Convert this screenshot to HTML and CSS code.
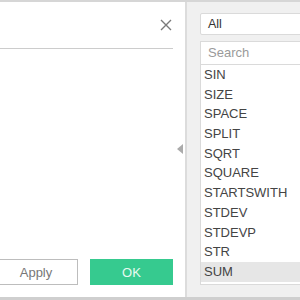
FILE: index.html
```html
<!DOCTYPE html>
<html>
<head lang="en">
    <meta charset="UTF-8">
    <title>calc-editor</title>
    <link rel="stylesheet" href="styles.css">
</head>
<body>
<div class="frame">
    <section class="dialog">
        <div class="dialog-head">
            <svg class="close" width="12" height="12" viewBox="0 0 12 12">
                <path d="M1 1 L11 11 M11 1 L1 11" stroke="#7a7a7a" stroke-width="1.4" fill="none"/>
            </svg>
        </div>
        <div class="dialog-body"></div>
        <div class="dialog-foot">
            <button class="btn btn-apply">Apply</button>
            <button class="btn btn-ok">OK</button>
        </div>
        <span class="collapse"></span>
    </section>
    <section class="side">
        <div class="select">All</div>
        <div class="search">Search</div>
        <ul class="func-list">
            <li>SIN</li>
            <li>SIZE</li>
            <li>SPACE</li>
            <li>SPLIT</li>
            <li>SQRT</li>
            <li>SQUARE</li>
            <li>STARTSWITH</li>
            <li>STDEV</li>
            <li>STDEVP</li>
            <li>STR</li>
            <li class="active">SUM</li>
        </ul>
    </section>
</div>
</body>
</html>
```

FILE: styles.css
```css
body {
    margin: 0;
    font-family: "Liberation Sans", Arial, sans-serif;
    font-size: 13px;
    color: #444;
}
.frame {
    display: flex;
    width: 300px;
    height: 300px;
    box-sizing: border-box;
    border-top: 2px solid #d6d6d6;
    border-bottom: 3px solid #cfcfcf;
    overflow: hidden;
}
.dialog {
    position: relative;
    width: 187px;
    flex-shrink: 0;
    box-sizing: border-box;
    background: #fff;
    border-right: 2px solid #dcdcdc;
    display: flex;
    flex-direction: column;
}
.dialog-head {
    height: 46px;
    margin-right: 12px;
    border-bottom: 1px solid #cccccc;
    display: flex;
    justify-content: flex-end;
    align-items: flex-start;
}
.close {
    margin-top: 17px;
    margin-right: 1px;
}
.dialog-body {
    flex: 1;
}
.dialog-foot {
    display: flex;
    justify-content: flex-end;
    gap: 12px;
    padding: 0 12px 12px 0;
}
.btn {
    flex-shrink: 0;
    height: 26px;
    font-family: inherit;
    font-size: 13px;
    box-sizing: border-box;
}
.btn-apply {
    width: 84px;
    background: #fff;
    border: 1px solid #bdbdbd;
    color: #777;
}
.btn-ok {
    width: 83px;
    background: #36ca8f;
    border: none;
    color: #e8faf1;
}
.collapse {
    position: absolute;
    right: 2px;
    top: 142px;
    width: 0;
    height: 0;
    border-top: 5px solid transparent;
    border-bottom: 5px solid transparent;
    border-right: 6px solid #ababab;
}
.side {
    flex: 1;
    background: #f0f0f0;
    padding: 11px 0 0 13px;
    overflow: hidden;
}
.select, .search {
    width: 120px;
    box-sizing: border-box;
    background: #fff;
    border: 1px solid #dadada;
    padding-left: 7px;
}
.select {
    height: 22px;
    line-height: 20px;
    border-radius: 2px;
    font-size: 12.5px;
    color: #333;
}
.search {
    margin-top: 6px;
    height: 24px;
    line-height: 22px;
    color: #9a9a9a;
    font-size: 13px;
}
.func-list {
    list-style: none;
    margin: 0;
    padding: 0;
    width: 120px;
    height: 220px;
    box-sizing: border-box;
    background: #fff;
    border: 1px solid #dadada;
    border-top: none;
}
.func-list li {
    height: 19.7px;
    line-height: 19.7px;
    padding-left: 3px;
}
.func-list li.active {
    background: #e6e6e6;
}
```
